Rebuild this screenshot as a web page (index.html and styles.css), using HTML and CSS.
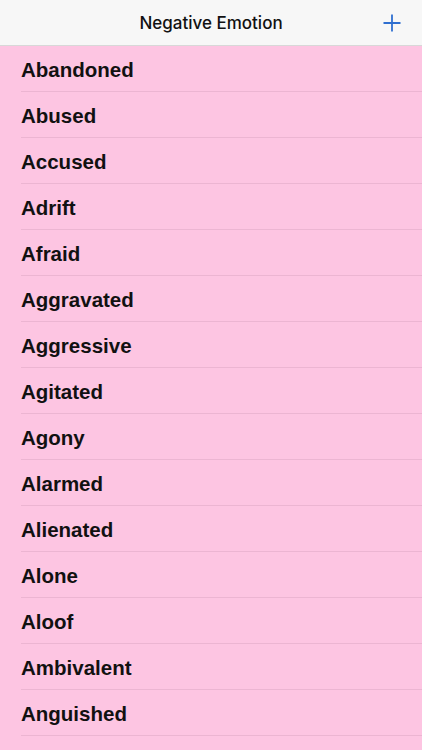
FILE: index.html
```html
<!DOCTYPE html>
<html lang="en">
<head>
<meta charset="utf-8">
<title>Negative Emotion</title>
<link rel="stylesheet" href="styles.css">
</head>
<body>
<div class="app">
  <header class="nav">
    <div class="nav-title">Negative Emotion</div>
    <button class="nav-add" aria-label="Add">
      <svg width="18" height="18" viewBox="0 0 18 18"><path d="M9 0.5V17.5M0.5 9H17.5" stroke="#2f6fd0" stroke-width="1.8" fill="none"/></svg>
    </button>
  </header>
  <ul class="list">
    <li class="row"><span>Abandoned</span></li>
    <li class="row"><span>Abused</span></li>
    <li class="row"><span>Accused</span></li>
    <li class="row"><span>Adrift</span></li>
    <li class="row"><span>Afraid</span></li>
    <li class="row"><span>Aggravated</span></li>
    <li class="row"><span>Aggressive</span></li>
    <li class="row"><span>Agitated</span></li>
    <li class="row"><span>Agony</span></li>
    <li class="row"><span>Alarmed</span></li>
    <li class="row"><span>Alienated</span></li>
    <li class="row"><span>Alone</span></li>
    <li class="row"><span>Aloof</span></li>
    <li class="row"><span>Ambivalent</span></li>
    <li class="row"><span>Anguished</span></li>
  </ul>
</div>
</body>
</html>
```
FILE: styles.css
```css
html, body {
  margin: 0;
  padding: 0;
  height: 100%;
  overflow: hidden;
  background: #fdc5e2;
}
.app {
  display: flex;
  flex-direction: column;
  height: 100%;
  font-family: "Liberation Sans", Arial, sans-serif;
}
.nav {
  height: 45px;
  background: #f7f7f7;
  border-bottom: 1px solid #d8d8d8;
  display: grid;
  grid-template-columns: 1fr auto 1fr;
  align-items: center;
  flex-shrink: 0;
}
.nav-title {
  grid-column: 2;
  font-size: 17px;
  color: #111;
  font-family: Inter, "Liberation Sans", sans-serif;
  font-weight: 500;
}
.nav-add {
  grid-column: 3;
  justify-self: end;
  margin-right: 21px;
  background: none;
  border: 0;
  padding: 0;
  display: flex;
}
.list {
  list-style: none;
  margin: 0;
  padding: 0 0 0 21px;
  background: #fdc5e2;
}
.row {
  height: 46px;
  box-sizing: border-box;
  border-bottom: 1px solid #ecb5d2;
  display: flex;
  align-items: center;
  font-size: 20.5px;
  font-weight: bold;
  color: #111;
  padding-top: 2px;
}
```
